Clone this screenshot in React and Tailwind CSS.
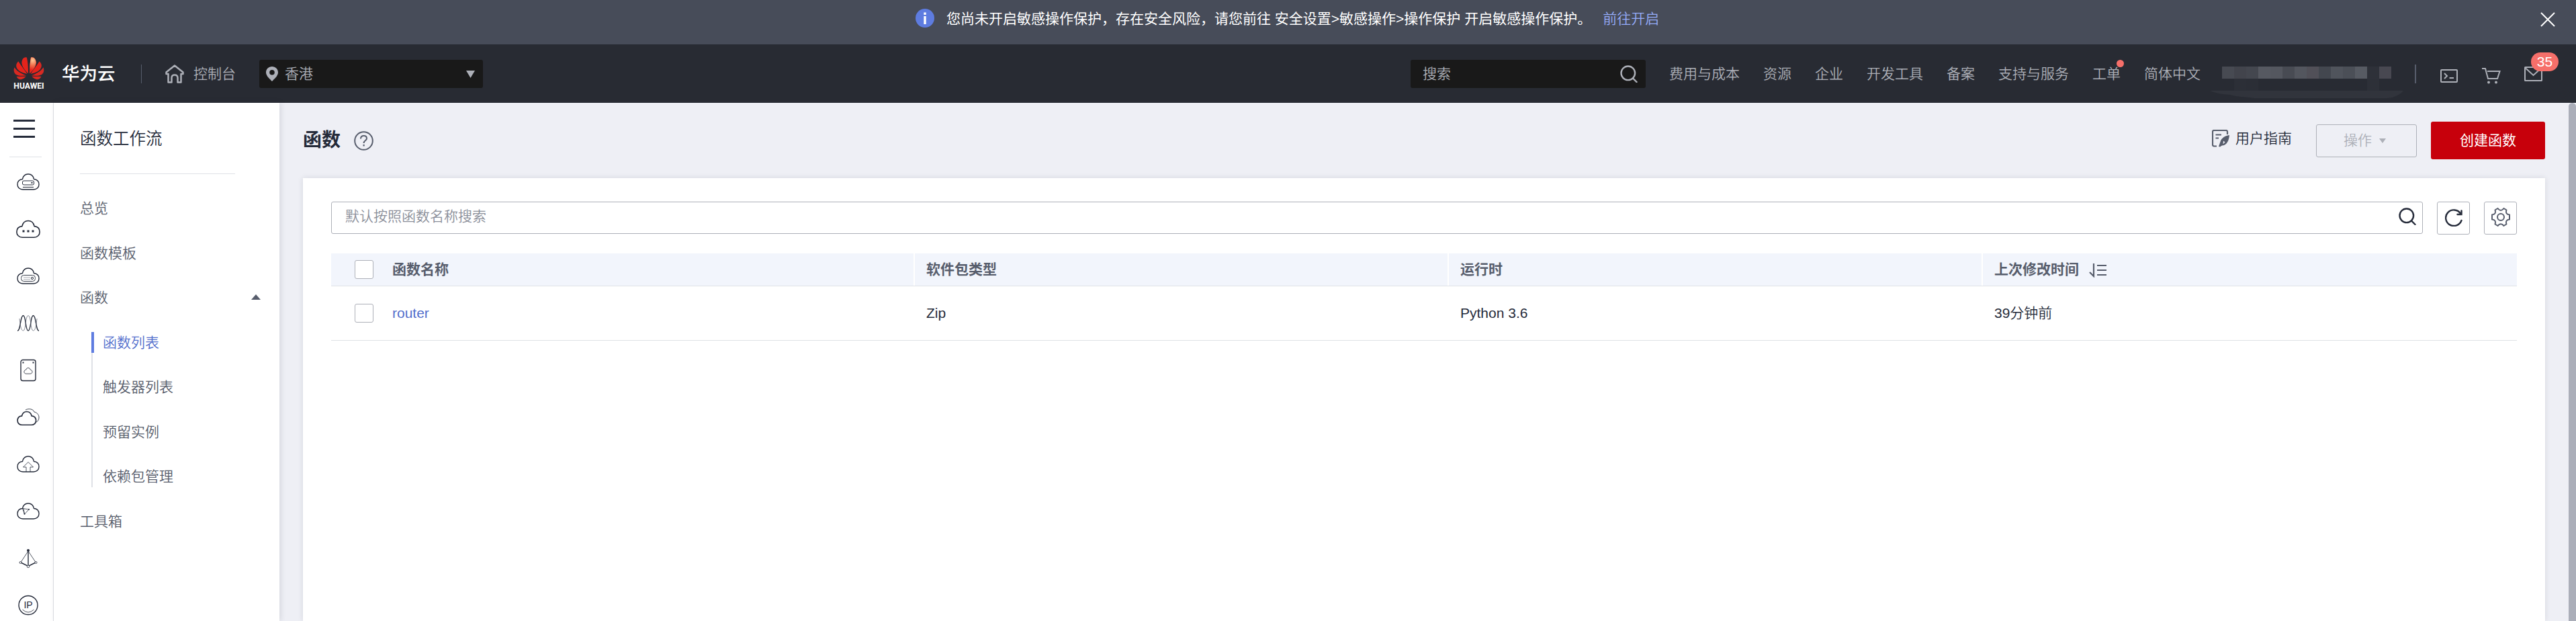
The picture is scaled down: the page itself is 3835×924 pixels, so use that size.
import React from "react";

const CLOUD = "M9 24 C4 24 1 20.500 1 16.500 C1 12 4 9 8.500 8.500 C9.500 4 12.500 1 17 1 C21.500 1 24.500 4 25.500 8.500 C30 9 33 12 33 16.500 C33 20.500 30 24 25 24 Z";

function RailIcon({ children, w = 34, h = 26 }) {
  return (
    <div className="flex h-[70px] w-[83px] shrink-0 items-center justify-center">
      <svg width={w} height={h} viewBox={`0 0 ${w} ${h}`} fill="none" stroke="#252b3a" strokeWidth="1.4" className="overflow-visible">
        {children}
      </svg>
    </div>
  );
}

function Rail() {
  return (
    <aside className="flex h-[771px] w-20 shrink-0 flex-col overflow-hidden border-r border-[#dfe1e6] bg-white">
      <div className="flex flex-col gap-[9px] pt-[25px] pl-5">
        <div className="h-[3px] w-8 bg-[#252b3a]" />
        <div className="h-[3px] w-8 bg-[#252b3a]" />
        <div className="h-[3px] w-8 bg-[#252b3a]" />
      </div>
      <div className="mt-[28px] ml-[14px] h-px w-12 shrink-0 bg-[#dfe1e6]" />
      <div className="mt-[2px] flex flex-col">
        <RailIcon>
          <path d={CLOUD} />
          <rect x="8.500" y="11" width="17" height="6" rx="2" strokeWidth="1" />
          <rect x="21.500" y="13" width="2" height="2" fill="#252b3a" stroke="none" />
          <path d="M9 20.500 H25" strokeWidth="1" />
        </RailIcon>
        <RailIcon>
          <path d={CLOUD} transform="translate(-1.200 -0.500) scale(1.070)" strokeWidth="1.500" />
          <path d="M8.500 14.500 h3 v3 h-3z M15.500 14.500 h3 v3 h-3z M22.500 14.500 h3 v3 h-3z" fill="#252b3a" stroke="none" />
        </RailIcon>
        <RailIcon>
          <path d={CLOUD} />
          <rect x="6.500" y="11.500" width="21" height="9" rx="4" strokeWidth="0.9" />
          <path d="M10 14.700 H20 M10 17.500 H20" strokeWidth="0.7" stroke="#8a8e99" />
          <circle cx="23" cy="16" r="1.600" strokeWidth="1" />
        </RailIcon>
        <RailIcon>
          <path d="M1 24 C6 24 5 1.500 9.500 1.500 C14 1.500 12.500 24 17 24 C21.500 24 20 1.500 24.500 1.500 C29 1.500 28 24 33 24" />
          <path d="M4 6 C5 14 6 24 9.500 24 C14 24 12.500 1.500 17 1.500 C21.500 1.500 20 24 24.500 24 C28 24 29 14 30 6" strokeWidth="0.8" stroke="#6b707d" />
        </RailIcon>
        <RailIcon w={24} h={32}>
          <rect x="1" y="0.500" width="22" height="31" rx="3" />
          <path d="M3.500 3.500 h2 v2 h-2z M18.500 3.500 h2 v2 h-2z" fill="#252b3a" stroke="none" />
          <path d={CLOUD} transform="translate(5.500 12) scale(0.380)" strokeWidth="2.200" />
        </RailIcon>
        <RailIcon>
          <path d={CLOUD} transform="translate(0.200 3.600) scale(0.860)" strokeWidth="1.900" />
          <path d="M13 2 C17 -0.500 24 0 26 5 C31 6 33 10 33 13 C33 17 31 19 29 20" strokeWidth="0.9" />
        </RailIcon>
        <RailIcon>
          <path d={CLOUD} />
          <path d="M14 24 V17 H9.500 L17 9.500 L24.500 17 H20 V24" strokeWidth="0.8" />
        </RailIcon>
        <RailIcon>
          <path d={CLOUD} />
          <path d="M8.500 8.500 L18 10 L11.500 17 Z M10 8.500 L11.500 17" strokeWidth="0.8" />
          <circle cx="18" cy="10" r="1" fill="#252b3a" stroke="none" />
          <circle cx="11.500" cy="16.800" r="1" fill="#252b3a" stroke="none" />
        </RailIcon>
        <RailIcon w={28} h={30}>
          <path d="M14 4 L3 20.500 M14 4 L25 20.500" strokeWidth="0.8" />
          <path d="M14 4 V26 M3 21 L14 26.500 L25 21" />
          <circle cx="14" cy="3" r="2" fill="#252b3a" stroke="none" />
          <circle cx="2.500" cy="21" r="1.500" fill="#fff" strokeWidth="0.8" />
          <circle cx="25.500" cy="21" r="1.500" fill="#fff" strokeWidth="0.8" />
          <circle cx="14" cy="26.800" r="1.800" fill="#fff" strokeWidth="0.8" />
        </RailIcon>
        <RailIcon w={30} h={30}>
          <circle cx="15" cy="14.500" r="14" />
          <path d="M6.500 21 Q15 29 23.500 21" strokeWidth="0.8" />
          <text x="15" y="19" textAnchor="middle" fontSize="14" fill="#252b3a" stroke="none" fontFamily="Liberation Sans, sans-serif">IP</text>
        </RailIcon>
      </div>
    </aside>
  );
}

function Logo() {
  const half = (
    <>
      <path d="M66 73 C66 45 64 20 60 2 C48 -2 38 8 37 24 C38 44 52 60 66 73" />
      <path d="M61 75 C48 55 34 38 22 19 C10 30 10 44 19 55 C30 68 48 72 61 75" />
      <path d="M58 82 C40 76 18 66 4 46 C0 60 2 71 12 78 C24 85 44 84 58 82" />
      <path d="M56 86 L14 86 C18 97 29 103 38 98 C46 95 52 90 56 86" />
    </>
  );
  return (
    <svg width="46" height="49" viewBox="0 0 138 147" className="shrink-0">
      <defs>
        <radialGradient id="petal" gradientUnits="userSpaceOnUse" cx="68" cy="52" r="72">
          <stop offset="0" stopColor="#e5231b" />
          <stop offset="0.6" stopColor="#e5231b" />
          <stop offset="1" stopColor="#c9302a" />
        </radialGradient>
        <radialGradient id="glow" gradientUnits="userSpaceOnUse" cx="86" cy="14" r="44">
          <stop offset="0" stopColor="#fcc794" />
          <stop offset="0.5" stopColor="#f2744f" />
          <stop offset="1" stopColor="#e5231b" />
        </radialGradient>
      </defs>
      <g fill="url(#petal)">{half}</g>
      <g fill="url(#petal)" transform="translate(138 0) scale(-1 1)">{half}</g>
      <path fill="url(#glow)" d="M72 73 C72 45 74 20 78 2 C90 -2 100 8 101 24 C100 44 86 60 72 73" />
      <text x="1" y="141" fontSize="36" fontWeight="700" textLength="136" lengthAdjust="spacingAndGlyphs" fill="#fff" fontFamily="Roboto, sans-serif">HUAWEI</text>
    </svg>
  );
}

function SearchIcon({ size, color }) {
  return (
    <svg width={size} height={size} viewBox="0 0 26 26" fill="none" stroke={color} strokeWidth="2.400" strokeLinecap="round" className="shrink-0">
      <circle cx="11.800" cy="11.800" r="10.300" />
      <path d="M19 19.500 L24.500 25" />
    </svg>
  );
}

const MOSAIC = ["#474a52", "#42444c", "#44474f", "#565961", "#54575f", "#484b53", "#53565e", "#515058", "#43474f", "#50545c", "#4b4f57", "#575b63", "#2e3139", "#484851"];

function Redacted() {
  return (
    <div className="h-[73px] w-[288px] pt-[26px]">
      <div className="flex h-[18px] pl-[18px]">
        {MOSAIC.map((c, i) => (
          <div key={i} className="w-[18px]" style={{ backgroundColor: c }} />
        ))}
      </div>
      <div className="flex h-[18px] pl-9">
        <div className="w-[18px] bg-[#2c2f37]" />
        <div className="w-[18px] bg-[#2b2e36]" />
        <div className="ml-[162px] w-[18px] bg-[#2d3038]" />
      </div>
      <svg width="288" height="11" viewBox="0 0 288 11">
        <path d="M0 0 H288 Q280 10 264 11 H66 C50 9 40 9 30 6 Q10 5 0 0 Z" fill="#31343c" />
      </svg>
    </div>
  );
}

const NAV = ["费用与成本", "资源", "企业", "开发工具", "备案", "支持与服务"];

function Header() {
  return (
    <header className="flex h-[87px] items-center bg-[#282b33] text-[#adb0b8]">
      <div className="flex w-[210px] items-center gap-[26px] pl-5">
        <Logo />
        <span className="text-[26.500px] leading-[40px] font-medium whitespace-nowrap text-white">华为云</span>
      </div>
      <div className="h-7 w-px bg-[#575d6c]" />
      <svg width="28" height="28" viewBox="0 0 28 28" fill="none" stroke="#adb0b8" strokeWidth="2.500" strokeLinejoin="round" strokeLinecap="round" className="ml-[35px]">
        <path d="M14 1.500 L1.500 11.500 V14 H4.500 V26.500 H9.500 V20 Q9.500 15.500 14 15.500 Q18.500 15.500 18.500 20 V26.500 H23.500 V14 H26.500 V11.500 Z" />
      </svg>
      <span className="pl-[14px] whitespace-nowrap">控制台</span>
      <div className="ml-[35px] flex h-[42px] w-[333px] items-center rounded-[3px] bg-[#191919] pr-3 pl-[10px]">
        <svg width="18" height="22" viewBox="0 0 18 22" fill="#adb0b8">
          <path fillRule="evenodd" d="M9 0 C4 0 0 3.800 0 8.800 C0 14 6 19 9 22 C12 19 18 14 18 8.800 C18 3.800 14 0 9 0 Z M9 5 A3.800 3.800 0 1 1 9 12.600 A3.800 3.800 0 1 1 9 5 Z" />
        </svg>
        <span className="ml-[10px] flex-1">香港</span>
        <svg width="13" height="11" viewBox="0 0 13 11" fill="#adb0b8" className="mt-[2px]"><path d="M0 0 H13 L6.500 11 Z" /></svg>
      </div>
      <div className="ml-auto flex h-[42px] w-[350px] items-center justify-between rounded-[3px] bg-[#191919] pr-3 pl-[18px]">
        <span>搜索</span>
        <SearchIcon size={26} color="#adb0b8" />
      </div>
      <nav className="ml-[35px] flex items-center gap-[35px] whitespace-nowrap">
        {NAV.map((t) => <span key={t}>{t}</span>)}
        <span className="relative">
          工单
          <i className="absolute -top-[6px] -right-[5px] size-[11px] rounded-full bg-[#f66f6a]" />
        </span>
        <span>简体中文</span>
      </nav>
      <div className="ml-[14px]"><Redacted /></div>
      <div className="ml-[17px] h-7 w-[2px] bg-[#575d6c]" />
      <svg width="26" height="20" viewBox="0 0 26 20" fill="none" stroke="#adb0b8" strokeWidth="2" className="mt-[7px] ml-9">
        <rect x="1" y="1" width="24" height="18" rx="1" />
        <path d="M6 6 L10 10 L6 14 M13.500 13 H20" />
      </svg>
      <svg width="28" height="24" viewBox="0 0 28 24" fill="none" stroke="#adb0b8" strokeWidth="2" className="mt-[7px] ml-9">
        <path d="M0 1 H5 L9 16 H23 L26.500 5 H8" />
        <circle cx="10" cy="21.500" r="2" fill="#adb0b8" stroke="none" />
        <circle cx="21" cy="21.500" r="2" fill="#adb0b8" stroke="none" />
      </svg>
      <div className="relative mr-[50px] ml-[35px]">
        <svg width="27" height="22" viewBox="0 0 27 22" fill="none" stroke="#adb0b8" strokeWidth="2">
          <rect x="1" y="1" width="25" height="20" rx="0.500" />
          <path d="M2 2.500 L13.500 13 L25 2.500" />
        </svg>
        <span className="absolute -top-[21px] left-[10px] flex h-7 w-[41px] items-center justify-center rounded-full bg-[#f66f6a] text-[21px] leading-none text-white">35</span>
      </div>
    </header>
  );
}

function Sidebar() {
  const item = "flex h-[66.500px] items-center";
  return (
    <aside className="relative h-[771px] w-[336px] shrink-0 bg-white pl-[39px] text-[#575d6c] shadow-[2px_0_8px_rgba(37,43,58,0.12)]">
      <div className="flex h-[106px] w-[231px] items-center border-b border-[#dfe1e6] pt-[3px] text-[24.500px] text-[#252b3a]">函数工作流</div>
      <div className="mt-[18px]">
        <div className={item}>总览</div>
        <div className={item}>函数模板</div>
        <div className={`${item} justify-between pr-[28px]`}>
          函数
          <svg width="14" height="8" viewBox="0 0 14 8" fill="#575d6c" className="mb-[2px]"><path d="M0 8 H14 L7 0 Z" /></svg>
        </div>
        <div className="flex h-[266px] pl-[17px]">
          <div className="mt-[17px] h-[231px] w-1 shrink-0">
            <div className="h-[31px] w-1 bg-[#5e7ce0]" />
            <div className="h-[200px] w-[2px] bg-[#dfe1e6]" />
          </div>
          <div className="pl-[13px]">
            <div className={`${item} text-[#526ecc]`}>函数列表</div>
            <div className={item}>触发器列表</div>
            <div className={item}>预留实例</div>
            <div className={item}>依赖包管理</div>
          </div>
        </div>
        <div className={item}>工具箱</div>
      </div>
    </aside>
  );
}

function Checkbox() {
  return <div className="size-7 rounded-[3px] border border-[#adb0b8] bg-white" />;
}

const COLS = "grid grid-cols-[92px_776px_795px_795px_796px]";

function Content() {
  const th = "flex items-center border-l-2 border-white pl-[17px]";
  const td = "flex items-center pl-[19px]";
  return (
    <main className="flex h-[771px] min-w-0 flex-1 flex-col bg-[#eeeff5] pr-[35px] pl-[35px]">
      <div className="flex h-28 items-center">
        <h1 className="text-[28px] leading-[40px] font-bold text-[#252b3a]">函数</h1>
        <svg width="29" height="29" viewBox="0 0 29 29" fill="none" stroke="#575d6c" strokeWidth="2" className="ml-5">
          <circle cx="14.500" cy="14.500" r="13.300" />
          <path d="M10 11.500 C10 8.500 12 7 14.600 7 C17.200 7 19 8.700 19 11 C19 14 14.600 14.300 14.600 18" />
          <path d="M14.600 20 V22.500" strokeWidth="2.200" />
        </svg>
        <svg width="26" height="26" viewBox="0 0 26 26" fill="none" stroke="#575d6c" strokeWidth="2.200" className="mb-[6px] ml-auto">
          <path d="M23 7 V3 Q23 1 21 1 H3 Q1 1 1 3 V22 Q1 24.500 3 24.500 H7" />
          <path d="M5.500 7.500 H14 M5.500 12.500 H10" />
          <path fillRule="evenodd" fill="#575d6c" stroke="none" d="M26 8 C19 9 13.500 13 12.500 18 L10 25 L12 25.500 L15 23.500 C22 23.500 25.500 16 26 8 Z M17 16.500 L19.500 18.500 L16.500 21.500 Z" />
        </svg>
        <span className="mb-[6px] ml-[9px] text-[#252b3a]">用户指南</span>
        <button className="ml-9 flex h-[49px] w-[150px] items-center justify-center gap-[11px] rounded-[3px] border border-[#adb0b8] pr-[5px] text-[#adb0b8]">
          操作
          <svg width="10" height="7" viewBox="0 0 10 7" fill="#adb0b8"><path d="M0 0 H10 L5 7 Z" /></svg>
        </button>
        <button className="ml-[21px] h-14 w-[170px] rounded-[3px] bg-[#c7000b] font-normal text-white">创建函数</button>
      </div>
      <section className="flex-1 bg-white px-[42px] pt-[35px] shadow-[0_0_8px_rgba(37,43,58,0.12)]">
        <div className="flex h-[49px] items-start gap-[21px]">
          <div className="flex h-12 flex-1 items-center justify-between rounded-[3px] border border-[#adb0b8] pr-[9px] pl-5 text-[#8a8e99]">
            <span className="pb-1">默认按照函数名称搜索</span>
            <span className="pb-1"><SearchIcon size={26} color="#252b3a" /></span>
          </div>
          <div className="flex size-[49px] items-center justify-center rounded-[3px] border border-[#adb0b8]">
            <svg width="26" height="26" viewBox="0 0 26 26" fill="none" stroke="#252b3a" strokeWidth="2.400" strokeLinecap="round" className="mb-[2px]">
              <path d="M24.500 17 A12 11.800 0 1 1 23 6.500" />
              <path d="M24.500 2.500 V8 H18.500" />
            </svg>
          </div>
          <div className="flex size-[49px] items-center justify-center rounded-[3px] border border-[#adb0b8] pb-1">
            <svg width="28" height="28" viewBox="0 0 28 28" fill="none" stroke="#575d6c" strokeWidth="2" strokeLinejoin="round">
              <path d="M9.500 1 Q14 7 18.500 1 L22.500 3.500 Q20.500 10 27 10.500 V17.500 Q20.500 18 22.500 24.500 L18.500 27 Q14 21.500 9.500 27 L5.500 24.500 Q7.500 18 1 17.500 V10.500 Q7.500 10 5.500 3.500 Z" />
              <circle cx="14" cy="14" r="5" />
            </svg>
          </div>
        </div>
        <div className={`${COLS} mt-[28px] h-[49px] border-b border-[#dfe1e6] bg-[#f2f5fc] font-bold text-[#575d6c]`}>
          <div className="flex items-center pl-[35px]"><Checkbox /></div>
          <div className="-ml-px flex items-center">函数名称</div>
          <div className={`${th} -ml-px`}>软件包类型</div>
          <div className={`${th} -ml-px`}>运行时</div>
          <div className={`${th} -ml-px`}>
            上次修改时间
            <svg width="27" height="22" viewBox="0 0 27 22" fill="none" stroke="#575d6c" strokeWidth="2.200" className="mt-[2px] ml-[15px]">
              <path d="M7 1 V20 L1 14" />
              <path d="M12 4 H26 M12 11 H26 M12 18 H26" />
            </svg>
          </div>
        </div>
        <div className={`${COLS} h-[81px] border-b border-[#dfe1e6] text-[#252b3a]`}>
          <div className="flex items-center pl-[35px]"><Checkbox /></div>
          <div className="-ml-px flex items-center text-[#526ecc]">router</div>
          <div className={`${td} -ml-px`}>Zip</div>
          <div className={`${td} -ml-px`}>Python 3.6</div>
          <div className={`${td} -ml-px`}>39分钟前</div>
        </div>
      </section>
    </main>
  );
}

export default function App() {
  return (
    <div className="h-[924px] w-[3835px] overflow-hidden bg-[#eeeff5] font-['Liberation_Sans','Noto_Sans_CJK_SC',sans-serif] text-[21px] leading-[30px] font-[350]">
      <div className="flex h-[66px] items-start bg-[#474c59] pt-[13px] text-white">
        <svg width="28" height="28" viewBox="0 0 28 28" className="ml-[1363px]">
          <circle cx="14" cy="14" r="14" fill="#5e7ce0" />
          <path d="M12.300 5.500 h3.400 v3.400 h-3.400z M12.300 11 h3.400 v12 h-3.400z" fill="#fff" />
        </svg>
        <span className="ml-[18px] font-normal whitespace-nowrap">您尚未开启敏感操作保护，存在安全风险，请您前往 安全设置&gt;敏感操作&gt;操作保护 开启敏感操作保护。</span>
        <span className="ml-[17px] whitespace-nowrap text-[#96adfa]">前往开启</span>
        <svg width="22" height="22" viewBox="0 0 22 22" stroke="#fff" strokeWidth="2" className="mt-[5px] mr-[31px] ml-auto">
          <path d="M1 1 L21 21 M21 1 L1 21" />
        </svg>
      </div>
      <Header />
      <div className="flex h-[771px]">
        <Rail />
        <Sidebar />
        <Content />
        <div className="w-[11px] rounded-t-full bg-[#abaeb9]" />
      </div>
    </div>
  );
}
